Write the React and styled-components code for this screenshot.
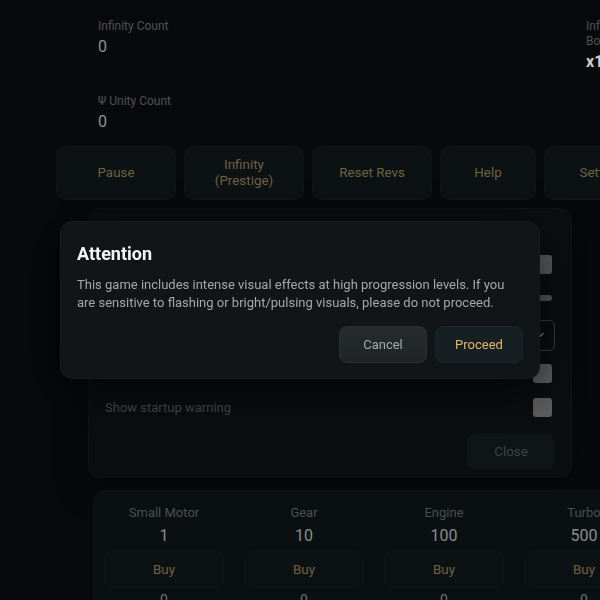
import React from "react"
import styled, { createGlobalStyle } from "styled-components"

const GlobalStyle = createGlobalStyle`
  html, body {
    margin: 0;
    padding: 0;
    background: #0a0c10;
    overflow: hidden;
  }
  body {
    font-family: Roboto, "Liberation Sans", sans-serif;
    color: #b0b6b9;
  }
  * {
    box-sizing: border-box;
  }
`

const Page = styled.div`
  width: 720px;
  min-height: 600px;
  padding: 19px 0 0 56px;
`

const Stats = styled.div`
  display: grid;
  grid-template-columns: 472px 60px;
  column-gap: 16px;
  row-gap: 22px;
  margin-left: 42px;
  align-items: start;
`

const Stat = styled.div`
  display: flex;
  flex-direction: column;
  gap: 3px;
`

const StatLabel = styled.span`
  font-size: 12px;
  line-height: 15px;
  color: #62676b;
`

const StatValue = styled.span`
  font-size: 16px;
  line-height: 20px;
  color: ${(p) => (p.$strong ? "#ffffff" : "#b0b6b9")};
  font-weight: ${(p) => (p.$strong ? 700 : 400)};
`

const Actions = styled.div`
  display: flex;
  gap: 8px;
  margin-top: 14px;
`

const ActionButton = styled.button`
  flex: none;
  width: ${(p) => p.$width}px;
  padding: 10px 8px;
  border: 1px solid #141b1d;
  border-radius: 10px;
  background: #10171a;
  color: #8a7a52;
  font-family: inherit;
  font-size: 13.4px;
  line-height: 16px;
`

const SettingsPanel = styled.section`
  width: 484px;
  margin: 8px 0 0 32px;
  padding: 16px 16px 8px;
  background: #0d1215;
  border: 1px solid #12181b;
  border-radius: 12px;
  box-shadow: 0 8px 30px rgba(0, 0, 0, 0.5);
`

const PanelTitle = styled.h3`
  margin: 0 0 9px;
  font-size: 16px;
  line-height: 17px;
  color: #c8ced1;
`

const SettingsList = styled.div`
  display: flex;
  flex-direction: column;
  gap: 10px;
`

const SettingRow = styled.div`
  display: flex;
  align-items: center;
  justify-content: space-between;
  height: ${(p) => p.$h}px;
  font-size: 13px;
  color: #565c60;
`

const Box = styled.span`
  width: 19px;
  height: 19px;
  margin: 3px 3px 3px 4px;
  border-radius: 3px;
  background: #777777;
`

const Track = styled.span`
  width: 160px;
  height: 6px;
  margin-right: 3px;
  border-radius: 3px;
  background: #707070;
`

const Select = styled.div`
  display: flex;
  align-items: center;
  justify-content: space-between;
  width: 140px;
  height: 31px;
  padding: 0 8px 0 10px;
  border: 1px solid #4a5053;
  border-radius: 6px;
  color: #a0a5a8;
  font-size: 13px;
`

const PanelFooter = styled.div`
  display: flex;
  justify-content: flex-end;
  margin-top: 14px;
`

const CloseButton = styled.button`
  width: 88px;
  height: 35px;
  border: 1px solid #161d1f;
  border-radius: 8px;
  background: #131a1c;
  color: #4d5558;
  font-family: inherit;
  font-size: 13.4px;
`

const Shop = styled.section`
  display: grid;
  grid-template-columns: repeat(4, 120px);
  column-gap: 20px;
  width: 600px;
  margin: 12px 0 0 37px;
  padding: 14px 10px 20px;
  background: #0d1316;
  border: 1px solid #11171a;
  border-radius: 12px;
`

const Item = styled.div`
  display: flex;
  flex-direction: column;
  align-items: center;
`

const ItemName = styled.span`
  font-size: 13px;
  line-height: 16px;
  color: #5e6367;
`

const ItemCost = styled.span`
  margin-top: 5px;
  font-size: 16px;
  line-height: 20px;
  color: #aab0b3;
`

const BuyButton = styled.button`
  width: 120px;
  height: 38px;
  margin-top: 4px;
  border: 1px solid #131a1c;
  border-radius: 8px;
  background: #10171a;
  color: #8a7a52;
  font-family: inherit;
  font-size: 13.4px;
`

const ItemOwned = styled.span`
  margin-top: 4px;
  font-size: 14px;
  color: #8a8f92;
`

const Overlay = styled.div`
  position: fixed;
  inset: 0;
  display: flex;
  align-items: center;
  justify-content: center;
  background: rgba(0, 0, 0, 0.2);
`

const Dialog = styled.div`
  width: 480px;
  padding: 20px 16px 15px;
  background: #111518;
  border: 1px solid #161b1e;
  border-radius: 12px;
  box-shadow: 0 12px 48px rgba(0, 0, 0, 0.7);
`

const DialogTitle = styled.h2`
  margin: 0 0 10px;
  font-size: 18px;
  line-height: 24px;
  font-weight: 700;
  color: #f4f5f6;
`

const DialogText = styled.p`
  margin: 0;
  font-size: 13px;
  line-height: 18px;
  color: #a3a8ab;
`

const DialogActions = styled.div`
  display: flex;
  justify-content: flex-end;
  gap: 8px;
  margin-top: 14px;
`

const DialogButton = styled.button`
  width: 88px;
  height: 37px;
  border-radius: 8px;
  font-family: inherit;
  font-size: 13px;
  border: 1px solid ${(p) => (p.$primary ? "#1b2528" : "#2a3133")};
  background: ${(p) =>
    p.$primary ? "#162022" : "linear-gradient(#252c2e, #1f2527)"};
  color: ${(p) => (p.$primary ? "#e6b66c" : "#a5adb0")};
`

const Chevron = () => (
  <svg width="12" height="12" viewBox="0 0 24 24" fill="none" stroke="currentColor" strokeWidth="3" strokeLinecap="round" strokeLinejoin="round">
    <path d="M6 9l6 6 6-6" />
  </svg>
)

const actions = [
  { label: "Pause", width: 120 },
  { label: "Infinity (Prestige)", width: 120 },
  { label: "Reset Revs", width: 120 },
  { label: "Help", width: 96 },
  { label: "Settings", width: 120 },
]

const items = [
  { name: "Small Motor", cost: 1 },
  { name: "Gear", cost: 10 },
  { name: "Engine", cost: 100 },
  { name: "Turbo", cost: 500 },
]

export default function App() {
  return (
    <>
      <GlobalStyle />
      <Page>
        <Stats>
          <Stat>
            <StatLabel>Infinity Count</StatLabel>
            <StatValue>0</StatValue>
          </Stat>
          <Stat>
            <StatLabel>Infinity Boost</StatLabel>
            <StatValue $strong>x1.00</StatValue>
          </Stat>
          <Stat>
            <StatLabel>Ψ Unity Count</StatLabel>
            <StatValue>0</StatValue>
          </Stat>
        </Stats>

        <Actions>
          {actions.map((a) => (
            <ActionButton key={a.label} $width={a.width}>
              {a.label === "Infinity (Prestige)" ? (
                <>
                  Infinity
                  <br />
                  (Prestige)
                </>
              ) : (
                a.label
              )}
            </ActionButton>
          ))}
        </Actions>

        <SettingsPanel>
          <PanelTitle>Settings</PanelTitle>
          <SettingsList>
            <SettingRow $h={26}>
              Sound effects
              <Box />
            </SettingRow>
            <SettingRow $h={22}>
              Volume
              <Track />
            </SettingRow>
            <SettingRow $h={32}>
              Number format
              <Select>
                Standard
                <Chevron />
              </Select>
            </SettingRow>
            <SettingRow $h={24}>
              Reduce motion
              <Box />
            </SettingRow>
            <SettingRow $h={25}>
              Show startup warning
              <Box />
            </SettingRow>
          </SettingsList>
          <PanelFooter>
            <CloseButton>Close</CloseButton>
          </PanelFooter>
        </SettingsPanel>

        <Shop>
          {items.map((it) => (
            <Item key={it.name}>
              <ItemName>{it.name}</ItemName>
              <ItemCost>{it.cost}</ItemCost>
              <BuyButton>Buy</BuyButton>
              <ItemOwned>0</ItemOwned>
            </Item>
          ))}
        </Shop>
      </Page>

      <Overlay>
        <Dialog>
          <DialogTitle>Attention</DialogTitle>
          <DialogText>
            This game includes intense visual effects at high progression
            levels. If you are sensitive to flashing or bright/pulsing visuals,
            please do not proceed.
          </DialogText>
          <DialogActions>
            <DialogButton>Cancel</DialogButton>
            <DialogButton $primary>Proceed</DialogButton>
          </DialogActions>
        </Dialog>
      </Overlay>
    </>
  )
}
